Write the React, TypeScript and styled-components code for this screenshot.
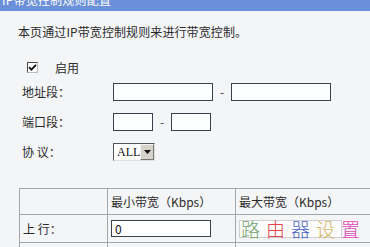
import styled, { createGlobalStyle } from 'styled-components'

const GlobalStyle = createGlobalStyle`
	html, body {
		margin: 0;
		padding: 0;
		background: #f4f5f7;
	}
	body {
		font-family: 'Noto Sans CJK SC', 'Noto Sans', sans-serif;
		font-size: 12px;
		color: #2b2b2b;
		overflow: hidden;
	}
`

const watermark = [
	{ ch: '路', color: '#6f9f6c' },
	{ ch: '由', color: '#e0484c' },
	{ ch: '器', color: '#4a63c4' },
	{ ch: '设', color: '#d2b45a' },
	{ ch: '置', color: '#e24ab8' },
]

const App = () => {
	return (
		<Page>
			<GlobalStyle />
			<TitleBar>
				<TitleText>IP带宽控制规则配置</TitleText>
			</TitleBar>

			<Intro>本页通过IP带宽控制规则来进行带宽控制。</Intro>

			<EnableRow>
				<CheckBox>
					<svg width='9' height='9' viewBox='0 0 9 9'>
						<path d='M1 4.2 L3.4 6.6 L8 1.8' fill='none' stroke='#111' strokeWidth='1.8' />
					</svg>
				</CheckBox>
				<span>启用</span>
			</EnableRow>

			<FieldRow>
				<Label>地址段：</Label>
				<Controls>
					<TextInput $w={100} />
					<Dash>-</Dash>
					<TextInput $w={100} />
				</Controls>
			</FieldRow>

			<FieldRow>
				<Label>端口段：</Label>
				<Controls>
					<TextInput $w={40} />
					<Dash>-</Dash>
					<TextInput $w={40} />
				</Controls>
			</FieldRow>

			<FieldRow>
				<Label>协 议：</Label>
				<Controls>
					<SelectBox>
						<SelectValue>ALL</SelectValue>
						<DropButton>
							<svg width='7' height='4' viewBox='0 0 7 4'>
								<path d='M0 0 H7 L3.5 4 Z' fill='#111' />
							</svg>
						</DropButton>
					</SelectBox>
				</Controls>
			</FieldRow>

			<Table>
				<colgroup>
					<col style={{ width: 88 }} />
					<col style={{ width: 128 }} />
					<col style={{ width: 160 }} />
				</colgroup>
				<tbody>
					<HeadRow>
						<Cell />
						<Cell>最小带宽（Kbps）</Cell>
						<Cell>最大带宽（Kbps）</Cell>
					</HeadRow>
					<BodyRow>
						<Cell>上 行：</Cell>
						<Cell>
							<ValueInput>0</ValueInput>
						</Cell>
						<Cell>
							<MarkWrap>
								<MarkBox />
								<MarkText>
									{watermark.map((w) => (
										<MarkChar key={w.ch} $color={w.color}>
											{w.ch}
										</MarkChar>
									))}
								</MarkText>
							</MarkWrap>
						</Cell>
					</BodyRow>
					<BodyRow>
						<Cell />
						<Cell />
						<Cell />
					</BodyRow>
				</tbody>
			</Table>
		</Page>
	)
}

export default App

const Page = styled.div`
	width: 370px;
	height: 247px;
	overflow: hidden;
`

const TitleBar = styled.div`
	height: 11px;
	background: #6b8fd8;
	overflow: hidden;
	padding-left: 2px;
`

const TitleText = styled.div`
	margin-top: -7px;
	font-size: 12px;
	line-height: 14px;
	color: #fff;
	letter-spacing: 0.2px;
`

const Intro = styled.div`
	margin: 14px 0 0 18px;
	line-height: 14px;
	letter-spacing: 0.1px;
`

const EnableRow = styled.div`
	display: flex;
	align-items: center;
	height: 20px;
	margin: 18px 0 0 27px;
	gap: 17px;
`

const CheckBox = styled.div`
	display: flex;
	align-items: center;
	justify-content: center;
	width: 9px;
	height: 9px;
	background: #fff;
	border: 1px solid;
	border-color: #4a4a4a #bdbdbd #bdbdbd #4a4a4a;
`

const FieldRow = styled.div`
	display: grid;
	grid-template-columns: 91px auto;
	align-items: center;
	height: 30px;
	padding-left: 22px;

	&:first-of-type {
		margin-top: 3px;
	}
`

const Label = styled.span`
	line-height: 14px;
`

const Controls = styled.div`
	display: flex;
	align-items: center;
`

const TextInput = styled.div<{ $w: number }>`
	box-sizing: border-box;
	width: ${(p) => p.$w}px;
	height: 18px;
	background: #fdfeff;
	border: 1px solid #38414c;
`

const Dash = styled.span`
	width: 18px;
	text-align: center;
	line-height: 14px;
	color: #444;
`

const SelectBox = styled.div`
	box-sizing: border-box;
	display: flex;
	align-items: stretch;
	width: 42px;
	height: 18px;
	background: #fff;
	border: 1px solid;
	border-color: #555 #e0e0e0 #e0e0e0 #555;
`

const SelectValue = styled.span`
	flex: 1;
	padding-left: 3px;
	font-family: 'Liberation Serif', serif;
	font-size: 12px;
	line-height: 16px;
	color: #111;
`

const DropButton = styled.span`
	box-sizing: border-box;
	display: flex;
	align-items: center;
	justify-content: center;
	width: 14px;
	background: #d6d3cb;
	border: 1px solid;
	border-color: #f4f4f4 #777 #777 #f4f4f4;
`

const Table = styled.table`
	margin: 21px 0 0 19px;
	border-collapse: collapse;
	table-layout: fixed;
	width: 376px;
`

const Cell = styled.td`
	border: 1px solid #a3a6ab;
	padding: 0 0 0 3px;
	white-space: nowrap;
	vertical-align: middle;
	line-height: 14px;
`

const HeadRow = styled.tr`
	height: 26px;
`

const BodyRow = styled.tr`
	height: 28px;
`

const ValueInput = styled.div`
	box-sizing: border-box;
	width: 100px;
	height: 17px;
	padding-left: 3px;
	background: #fff;
	border: 1px solid #38414c;
	font-size: 12px;
	line-height: 15px;
	color: #111;
`

const MarkWrap = styled.div`
	position: relative;
	height: 18px;
`

const MarkBox = styled.div`
	box-sizing: border-box;
	width: 103px;
	height: 18px;
	background: #fcfcfc;
	border: 1px solid #cfd0d2;
`

const MarkText = styled.div`
	position: absolute;
	left: 2px;
	top: -1px;
	display: flex;
	gap: 6px;
`

const MarkChar = styled.span<{ $color: string }>`
	font-size: 19px;
	line-height: 20px;
	font-weight: 300;
	color: ${(p) => p.$color};
`
